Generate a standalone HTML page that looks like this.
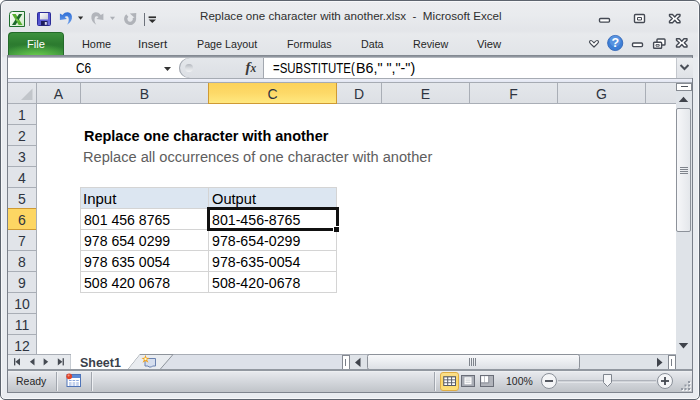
<!DOCTYPE html>
<html>
<head>
<meta charset="utf-8">
<title>Replace one character with another.xlsx - Microsoft Excel</title>
<style>
html,body{margin:0;padding:0;}
body{width:700px;height:400px;overflow:hidden;background:#fff;position:relative;font-family:"Liberation Sans",sans-serif;}
#win{position:absolute;left:0;top:0;width:698px;height:398px;border:1px solid #5d646e;border-radius:6px 6px 5px 5px;background:linear-gradient(#ecedf0 0px,#e9ebee 14px,#e3e5e9 30px,#e8eaed 33px,#e1e4e8 55px,#e9ecf0 57px,#e9ecf0 100%);box-shadow:inset 0 0 0 1px #f7f8fa;overflow:hidden;}
.abs{position:absolute;}
.t{position:absolute;white-space:nowrap;transform-origin:0 50%;line-height:1;}
.ui{font-size:11.3px;color:#262626;}
.cell{font-size:14px;color:#000;}
.hdr{font-size:14px;color:#2e3440;}
#inner{position:absolute;left:7px;top:55px;width:686px;height:338px;background:#fff;}
.colh{position:absolute;top:83px;height:20px;background:linear-gradient(#e9ecf0,#dfe3e8);border-right:1px solid #a9aeb6;}
.rowh{position:absolute;left:8px;width:28px;height:20px;background:#e1e4e9;border-bottom:1px solid #a9aeb6;}
.gl{position:absolute;background:#d4d4d4;}
</style>
</head>
<body>
<div id="win"></div>

<!-- title bar text -->
<div class="t ui" id="title" style="left:199.60px;transform:scaleX(1.0106);top:11.10px;font-size:11.5px;color:#2f2f2f;">Replace one character with another.xlsx&nbsp; -&nbsp; Microsoft Excel</div>

<!-- QAT icons -->
<svg class="abs" style="left:8px;top:9px" width="150" height="22" viewBox="0 0 150 22">
  <defs>
    <linearGradient id="gx" x1="0" y1="0" x2="1" y2="1"><stop offset="0" stop-color="#ffffff"/><stop offset="1" stop-color="#cfe8c8"/></linearGradient>
    <linearGradient id="gs" x1="0" y1="0" x2="1" y2="1"><stop offset="0" stop-color="#3f3fc4"/><stop offset="1" stop-color="#7474e2"/></linearGradient>
    <linearGradient id="gl" x1="0" y1="0" x2="1" y2="1"><stop offset="0" stop-color="#ffffff"/><stop offset="1" stop-color="#c9cbd6"/></linearGradient>
    <linearGradient id="gu" x1="0" y1="0" x2="0" y2="1"><stop offset="0" stop-color="#2f6fd6"/><stop offset="1" stop-color="#6fa0ec"/></linearGradient>
  </defs>
  <!-- excel icon -->
  <path d="M1.500 17.500 L1.500 5.500 Q1.500 2.500 4.500 2.500 L16.500 2.500 L16.500 17.500 Z" fill="url(#gx)" stroke="#1f6e2e" stroke-width="1"/>
  <path d="M4 5 L7.800 5 L14.500 16 L10.700 16 Z" fill="#58b030"/>
  <path d="M14.300 5 L11 5 L4 16 L7.500 16 Z" fill="#1e6a2c"/>
  <path d="M6.800 9.500 L9.300 9.500 L11.300 12.500 L8.800 12.500 Z" fill="#7acb4a"/>
  <!-- separator -->
  <rect x="21" y="4" width="1" height="13" fill="#8a8f98"/>
  <!-- save -->
  <rect x="29.500" y="3.500" width="13" height="13" rx="1" fill="url(#gs)" stroke="#2c2c98"/>
  <rect x="32" y="4" width="8" height="6.500" fill="url(#gl)"/>
  <rect x="33" y="12" width="6.500" height="4.500" fill="#1c1c5c"/>
  <rect x="36.800" y="13" width="2" height="2.800" fill="#d8d8f0"/>
  <!-- undo -->
  <path id="undo" d="M51.900 4.400 L51.900 11 L58.900 9.900 L56.700 8.100 C57.900 6.900 59.900 7 60.500 8.700 C61.200 10.900 60.600 13.500 59 15.800 C62.600 13.600 64.400 10.500 63.900 7.200 C63.300 3.400 58.200 1.500 54.500 5.900 Z" fill="url(#gu)"/>
  <path d="M70 7.500 L75.200 7.500 L72.600 10.800 Z" fill="#2e2e2e"/>
  <!-- redo (disabled) -->
  <path d="M51.900 4.400 L51.900 11 L58.900 9.900 L56.700 8.100 C57.900 6.900 59.900 7 60.500 8.700 C61.200 10.900 60.600 13.500 59 15.800 C62.600 13.600 64.400 10.500 63.900 7.200 C63.300 3.400 58.200 1.500 54.500 5.900 Z" fill="#b2b5bb" transform="translate(147.300 0) scale(-1 1)"/>
  <path d="M102 7.800 L107 7.800 L104.500 10.900 Z" fill="#adb0b6"/>
  <!-- repeat (disabled) -->
  <path d="M119.300 6.600 A4.400 4.400 0 1 0 126.300 8.600" fill="none" stroke="#b0b3b9" stroke-width="3.300"/>
  <path d="M121.800 4.600 L128.300 4 L128 10 Z" fill="#b0b3b9"/>
  <!-- separator -->
  <rect x="136" y="4" width="1" height="13" fill="#6d727b"/>
  <!-- customize -->
  <rect x="140.600" y="7.400" width="7.400" height="1.700" fill="#2e2e2e"/>
  <path d="M140.600 10.400 L148 10.400 L144.300 14.100 Z" fill="#2e2e2e"/>
</svg>

<!-- window buttons -->
<svg class="abs" style="left:580px;top:8px" width="115" height="46" viewBox="0 0 115 46">
  <g fill="#fff" stroke="#444953" stroke-width="1.400" stroke-linejoin="round">
    <rect x="19.500" y="10.500" width="10" height="3.600" rx="1"/>
    <rect x="54.500" y="6.500" width="10" height="8" rx="1"/>
    <rect x="57.500" y="9.500" width="4" height="2.500" stroke-width="1"/>
    <path d="M89.500 6.500 L92.500 6.500 L94.800 9 L97 6.500 L100 6.500 L100 8 L97.300 10.600 L100 13.200 L100 14.800 L97 14.800 L94.800 12.300 L92.500 14.800 L89.500 14.800 L89.500 13.200 L92.300 10.600 L89.500 8 Z"/>
    <!-- row 2 -->
    <path d="M9.500 34 Q9.500 32.500 11 32.500 Q12 32.500 14 34.800 Q16 32.500 17 32.500 Q18.500 32.500 18.500 34 Q18.500 35 14 39 Q9.500 35 9.500 34 Z" stroke-width="1.200"/>
    <rect x="52.500" y="35" width="10" height="3.600" rx="1"/>
    <rect x="77" y="31" width="8" height="6" rx=".8"/>
    <rect x="73.600" y="34.300" width="8" height="6" rx=".8"/>
    <rect x="76" y="36.600" width="3.200" height="1.600" stroke-width=".9"/>
    <path d="M96.500 30.800 L99.500 30.800 L101.800 33.200 L104 30.800 L107 30.800 L107 32.200 L104.300 34.800 L107 37.400 L107 39 L104 39 L101.800 36.500 L99.500 39 L96.500 39 L96.500 37.400 L99.300 34.800 L96.500 32.200 Z"/>
  </g>
  <circle cx="35.200" cy="35" r="7.600" fill="#3e7fd6" stroke="#2a5fb4" stroke-width=".8"/>
  <circle cx="35.200" cy="33" r="5.500" fill="#6ea4ea" opacity=".55"/>
  <text x="35.200" y="39.300" text-anchor="middle" font-family="Liberation Sans, sans-serif" font-weight="bold" font-size="12.500" fill="#fff">?</text>
</svg>

<!-- File tab -->
<div class="abs" style="left:8px;top:32px;width:56px;height:24px;border-radius:4px 4px 0 0;background:radial-gradient(ellipse 70% 55% at 50% 105%,#6fd24f 0%,rgba(95,196,74,0) 100%),linear-gradient(#3f9340 0%,#2c7b2f 50%,#33873a 100%);box-shadow:inset 1px 1px 0 #246a2a,inset -1px 0 0 #246a2a;"></div>
<div class="t ui" id="tFile" style="left:27.30px;transform:scaleX(0.9877);top:38.90px;color:#fff;">File</div>
<div class="t ui" id="tHome" style="left:81.60px;transform:scaleX(0.9648);top:38.90px;">Home</div>
<div class="t ui" id="tInsert" style="left:137.97px;transform:scaleX(1.0315);top:38.90px;">Insert</div>
<div class="t ui" id="tPage" style="left:196.90px;transform:scaleX(0.9487);top:38.90px;">Page Layout</div>
<div class="t ui" id="tForm" style="left:287.00px;transform:scaleX(0.9487);top:38.90px;">Formulas</div>
<div class="t ui" id="tData" style="left:361.30px;transform:scaleX(0.9439);top:38.90px;">Data</div>
<div class="t ui" id="tReview" style="left:413.30px;transform:scaleX(0.9503);top:38.90px;">Review</div>
<div class="t ui" id="tView" style="left:477.00px;transform:scaleX(0.9951);top:38.90px;">View</div>

<!-- inner content area -->
<div id="inner"></div>
<!-- ribbon bottom line -->
<div class="abs" style="left:7px;top:55px;width:686px;height:3px;background:linear-gradient(#7d838c,#8f959e 50%,#c5c9cf);"></div>
<!-- inner borders -->
<div class="abs" style="left:7px;top:56px;width:1px;height:337px;background:#7a808a;"></div>
<div class="abs" style="left:692px;top:56px;width:1px;height:337px;background:#7a808a;"></div>
<div class="abs" style="left:7px;top:392px;width:686px;height:1px;background:#7f858e;"></div>

<!-- formula bar -->
<div class="abs" style="left:8px;top:58px;width:684px;height:20px;background:#fff;"></div>
<div class="abs" style="left:179px;top:58px;width:84px;height:20px;border-radius:10px 0 0 10px;background:linear-gradient(#e4e7eb,#dcdfe4);box-shadow:inset 1px 0 0 #a3a8b0,inset 2px 0 1px -1px #c9cdd3;border-right:1px solid #a3a8b0;"></div>
<div class="abs" style="left:185px;top:64px;width:8px;height:8px;border-radius:4px;background:linear-gradient(#b4b8bf,#d9dce0 50%,#f2f3f5);"></div>
<div class="t" id="fx" style="left:245.500px;top:60px;font-family:'Liberation Serif',serif;font-style:italic;font-weight:bold;font-size:15px;color:#3a3a3a;">f<span style="font-size:11.500px;">x</span></div>
<div class="t cell" id="nameC6" style="left:76.00px;transform:scaleX(0.8503);top:61.25px;">C6</div>
<svg class="abs" style="left:163px;top:66px" width="10" height="6"><path d="M1 1 L8 1 L4.500 5 Z" fill="#333"/></svg>
<div class="t cell" id="formula" style="left:272.90px;transform:scaleX(0.8176);top:61.25px;">=SUBSTITUTE(</div><div class="t cell" id="formula2" style="left:355.68px;transform:scaleX(1.0207);top:61.25px;">B6," ","-")</div>
<!-- formula bar expand -->
<div class="abs" style="left:676px;top:58px;width:16px;height:20px;background:linear-gradient(#eceef1,#dfe2e7);border-left:1px solid #c3c7cd;"></div>
<svg class="abs" style="left:679px;top:63px" width="11" height="9"><path d="M1.500 2 L5.500 6 L9.500 2" fill="none" stroke="#4a4f58" stroke-width="2"/></svg>
<!-- lines under formula bar -->
<div class="abs" style="left:8px;top:78px;width:684px;height:1px;background:#a6abb3;"></div>
<div class="abs" style="left:8px;top:79px;width:684px;height:3px;background:linear-gradient(#eef0f8,#e2e6f2);"></div>
<div class="abs" style="left:8px;top:82px;width:684px;height:1px;background:#a6abb3;"></div>

<!-- column headers -->
<div class="abs" style="left:8px;top:83px;width:668px;height:20px;background:linear-gradient(#e4e7eb,#dde0e5);"></div>
<div class="abs" style="left:8px;top:103px;width:668px;height:1px;background:#a9aeb6;"></div>
<div class="abs" style="left:36px;top:83px;width:1px;height:271px;background:#a9aeb6;"></div>
<div class="abs" style="left:80px;top:83px;width:1px;height:20px;background:#a9aeb6;"></div>
<div class="abs" style="left:381px;top:83px;width:1px;height:20px;background:#a9aeb6;"></div>
<div class="abs" style="left:469px;top:83px;width:1px;height:20px;background:#a9aeb6;"></div>
<div class="abs" style="left:557px;top:83px;width:1px;height:20px;background:#a9aeb6;"></div>
<div class="abs" style="left:645px;top:83px;width:1px;height:20px;background:#a9aeb6;"></div>
<!-- selected col C -->
<div class="abs" style="left:208px;top:83px;width:129px;height:21px;box-sizing:border-box;background:linear-gradient(#fcd25a,#fdd968 50%,#ffe880);border:1px solid #cf9a33;border-top:none;"></div>
<svg class="abs" style="left:20px;top:88px" width="14" height="14"><path d="M12.500 0.500 L12.500 12 L1 12 Z" fill="#c1c5ca"/></svg>
<div class="t hdr" id="cA" style="left:37px;width:43px;text-align:center;top:87.05px;">A</div>
<div class="t hdr" id="cB" style="left:81px;width:127px;text-align:center;top:87.05px;">B</div>
<div class="t hdr" id="cC" style="left:209px;width:127px;text-align:center;top:87.05px;">C</div>
<div class="t hdr" id="cD" style="left:337px;width:44px;text-align:center;top:87.05px;">D</div>
<div class="t hdr" id="cE" style="left:382px;width:87px;text-align:center;top:87.05px;">E</div>
<div class="t hdr" id="cF" style="left:470px;width:87px;text-align:center;top:87.05px;">F</div>
<div class="t hdr" id="cG" style="left:558px;width:87px;text-align:center;top:87.05px;">G</div>

<!-- row headers -->
<div id="rows">
<div class="rowh" style="top:104px;"></div>
<div class="t hdr rn" style="top:108.05px;left:8px;width:28px;text-align:center;">1</div>
<div class="rowh" style="top:125px;"></div>
<div class="t hdr rn" style="top:129.05px;left:8px;width:28px;text-align:center;">2</div>
<div class="rowh" style="top:146px;"></div>
<div class="t hdr rn" style="top:150.05px;left:8px;width:28px;text-align:center;">3</div>
<div class="rowh" style="top:167px;"></div>
<div class="t hdr rn" style="top:171.05px;left:8px;width:28px;text-align:center;">4</div>
<div class="rowh" style="top:188px;"></div>
<div class="t hdr rn" style="top:192.05px;left:8px;width:28px;text-align:center;">5</div>
<div class="rowh" style="top:209px;background:#fdd663;border-bottom-color:#cf9a33;box-shadow:0 -1px 0 #cf9a33;"></div>
<div class="t hdr rn" style="top:213.05px;left:8px;width:28px;text-align:center;">6</div>
<div class="rowh" style="top:230px;"></div>
<div class="t hdr rn" style="top:234.05px;left:8px;width:28px;text-align:center;">7</div>
<div class="rowh" style="top:251px;"></div>
<div class="t hdr rn" style="top:255.05px;left:8px;width:28px;text-align:center;">8</div>
<div class="rowh" style="top:272px;"></div>
<div class="t hdr rn" style="top:276.05px;left:8px;width:28px;text-align:center;">9</div>
<div class="rowh" style="top:293px;"></div>
<div class="t hdr rn" style="top:297.05px;left:8px;width:28px;text-align:center;">10</div>
<div class="rowh" style="top:314px;"></div>
<div class="t hdr rn" style="top:318.05px;left:8px;width:28px;text-align:center;">11</div>
<div class="rowh" style="top:335px;"></div>
<div class="t hdr rn" style="top:339.05px;left:8px;width:28px;text-align:center;">12</div>
</div>

<!-- cells -->
<div class="abs" style="left:80px;top:187px;width:257px;height:22px;background:#dce6f1;"></div>
<div class="gl" style="left:80px;top:187px;width:257px;height:1px;"></div>
<div class="gl" style="left:80px;top:208px;width:257px;height:1px;"></div>
<div class="gl" style="left:80px;top:229px;width:257px;height:1px;"></div>
<div class="gl" style="left:80px;top:250px;width:257px;height:1px;"></div>
<div class="gl" style="left:80px;top:271px;width:257px;height:1px;"></div>
<div class="gl" style="left:80px;top:292px;width:257px;height:1px;"></div>
<div class="gl" style="left:80px;top:187px;width:1px;height:106px;"></div>
<div class="gl" style="left:208px;top:187px;width:1px;height:106px;"></div>
<div class="gl" style="left:336px;top:187px;width:1px;height:106px;"></div>
<!-- selection -->
<div class="abs" style="left:207px;top:207px;width:132px;height:24px;box-sizing:border-box;border:3px solid #111;"></div>
<div class="abs" style="left:333px;top:226px;width:7px;height:6px;background:#fff;"></div>
<div class="abs" style="left:334px;top:227px;width:5px;height:5px;background:#111;"></div>

<div class="t cell" id="h1" style="left:83.80px;transform:scaleX(1.0330);top:129.05px;font-weight:bold;">Replace one character with another</div>
<div class="t cell" id="h2" style="left:82.76px;transform:scaleX(1.0438);top:150.05px;color:#5e5e5e;">Replace all occurrences of one character with another</div>
<div class="t cell" id="i0" style="left:82.53px;transform:scaleX(1.0711);top:192.05px;">Input</div>
<div class="t cell" id="o0" style="left:211.50px;transform:scaleX(1.0466);top:192.05px;">Output</div>
<div class="t cell" id="i1" style="left:83.60px;transform:scaleX(1.0064);top:213.05px;">801 456 8765</div>
<div class="t cell" id="o1" style="left:211.50px;transform:scaleX(1.0126);top:213.05px;">801-456-8765</div>
<div class="t cell" id="i2" style="left:83.60px;transform:scaleX(1.0064);top:234.05px;">978 654 0299</div>
<div class="t cell" id="o2" style="left:211.50px;transform:scaleX(1.0126);top:234.05px;">978-654-0299</div>
<div class="t cell" id="i3" style="left:83.60px;transform:scaleX(1.0064);top:255.05px;">978 635 0054</div>
<div class="t cell" id="o3" style="left:211.50px;transform:scaleX(1.0126);top:255.05px;">978-635-0054</div>
<div class="t cell" id="i4" style="left:83.60px;transform:scaleX(1.0064);top:276.05px;">508 420 0678</div>
<div class="t cell" id="o4" style="left:211.50px;transform:scaleX(1.0126);top:276.05px;">508-420-0678</div>

<!-- vertical scrollbar -->
<div class="abs" style="left:676px;top:83px;width:16px;height:271px;background:#dfe3e8;"></div>
<div class="abs" style="left:676px;top:83px;width:16px;height:8px;box-sizing:border-box;border:1.500px solid #858a92;background:#fff;"></div>
<div class="abs" style="left:681px;top:86px;width:7px;height:1px;background:#4f545c;"></div>
<svg class="abs" style="left:678px;top:96px" width="12" height="7"><path d="M0.800 6 L5.500 0.800 L10.200 6 Z" fill="#3f434b"/></svg>
<div class="abs" style="left:676px;top:108px;width:15px;height:124px;box-sizing:border-box;border:1px solid #8d929a;border-radius:2px;background:linear-gradient(90deg,#f6f7f9,#e4e7eb);"></div>
<div class="abs" style="left:680px;top:167px;width:8px;height:1px;background:#7f848c;box-shadow:0 2px 0 #7f848c,0 4px 0 #7f848c,0 6px 0 #7f848c;"></div>
<svg class="abs" style="left:678px;top:342px" width="12" height="8"><path d="M0.800 1 L10.200 1 L5.500 6.500 Z" fill="#3f434b"/></svg>

<!-- sheet tab bar -->
<div class="abs" style="left:8px;top:354px;width:684px;height:16px;background:#dde1e9;"></div>
<div class="abs" style="left:8px;top:354px;width:668px;height:1px;background:#a9aeb6;"></div>
<div class="abs" style="left:8px;top:355px;width:63px;height:14px;background:#e6e9ed;"></div>
<svg class="abs" style="left:8px;top:354px" width="200" height="16" viewBox="0 0 200 16">
  <g fill="#454a52">
    <rect x="6" y="4.200" width="1.300" height="7.200"/><path d="M12 4.200 L12 11.400 L7.400 7.800 Z"/>
    <path d="M26.500 4.200 L26.500 11.400 L21.900 7.800 Z"/>
    <path d="M35.600 4.200 L35.600 11.400 L40.200 7.800 Z"/>
    <path d="M49.800 4.200 L49.800 11.400 L54.400 7.800 Z"/><rect x="54.600" y="4.200" width="1.300" height="7.200"/>
  </g>
  <path d="M63 0.500 L63 15.500" stroke="#a9aeb6" fill="none"/>
  <path d="M63 0 L132 0 L120 15.500 L63 15.500 Z" fill="#fff"/>
  <path d="M132 0.500 L120 15.500" stroke="#8e949c" fill="none"/>
  <path d="M120 15.500 L152 15.500 L165 0.500 L132 0.500" fill="#e9ecf0" stroke="#8e949c"/>
  <path d="M137 4.500 H147.500 V12 H144.500 L143.500 13 H141 L140 12 H137 Z" fill="#d5deee" stroke="#6a82b0" stroke-width="1"/>
  <path d="M137.500 0.800 L138.500 3.800 L141.500 4 L139 5.800 L140.500 8.800 L137.500 7 L134.500 8.800 L136 5.800 L133.500 4 L136.500 3.800 Z" fill="#f0a21c"/>
  <circle cx="137.500" cy="5" r="1.200" fill="#fff6c8"/>
</svg>
<div class="t ui" id="sheet1" style="left:80.40px;transform:scaleX(1.0384);top:356.7px;font-weight:bold;font-size:12px;color:#3a3f4a;">Sheet1</div>

<!-- horizontal scrollbar -->
<div class="abs" style="left:350px;top:355px;width:326px;height:15px;background:#dfe3e8;"></div>
<div class="abs" style="left:342px;top:355px;width:8px;height:15px;box-sizing:border-box;border:1.500px solid #858a92;background:#fff;"></div>
<div class="abs" style="left:345px;top:359px;width:1px;height:7px;background:#7a7f88;"></div>
<svg class="abs" style="left:354px;top:357px" width="8" height="11"><path d="M6.500 0.800 L6.500 10 L1 5.400 Z" fill="#3f434b"/></svg>
<div class="abs" style="left:367px;top:354px;width:213px;height:16px;box-sizing:border-box;border:1px solid #8d929a;border-radius:2.500px;background:linear-gradient(#f7f8fa,#eceef1 45%,#dde0e5);"></div>
<div class="abs" style="left:469px;top:358px;width:1px;height:8px;background:#7f848c;box-shadow:2px 0 0 #7f848c,4px 0 0 #7f848c,6px 0 0 #7f848c;"></div>
<svg class="abs" style="left:656px;top:357px" width="8" height="11"><path d="M1 0.800 L1 10 L6.500 5.400 Z" fill="#3f434b"/></svg>
<div class="abs" style="left:668px;top:355px;width:8px;height:15px;box-sizing:border-box;border:1.500px solid #858a92;background:#fff;"></div>
<div class="abs" style="left:671px;top:359px;width:1px;height:7px;background:#7a7f88;"></div>
<div class="abs" style="left:676px;top:354px;width:16px;height:16px;background:#dfe3e8;"></div>
<div class="abs" style="left:8px;top:369px;width:684px;height:2px;background:#9298a0;"></div>

<!-- status bar -->
<div class="abs" style="left:8px;top:371px;width:684px;height:21px;background:linear-gradient(#f0f2f4 0px,#e6e8ec 1.500px,#d6d9de 45%,#c0c4c9 100%);"></div>
<div class="t ui" id="ready" style="left:16.40px;transform:scaleX(0.9271);top:376.10px;">Ready</div>
<div class="abs" style="left:56px;top:372px;width:1px;height:19px;background:#a1a6ae;box-shadow:1px 0 0 #eef0f3;"></div>
<div class="abs" style="left:91px;top:372px;width:1px;height:19px;background:#a1a6ae;box-shadow:1px 0 0 #eef0f3;"></div>
<svg class="abs" style="left:65px;top:372px" width="18" height="18" viewBox="0 0 18 18">
  <rect x="2" y="2.500" width="13.500" height="12" fill="#fff" stroke="#4f74b8"/>
  <rect x="2.500" y="3" width="12.500" height="3" fill="#5d8ad6"/>
  <path d="M4 8.500 H14 M4 11 H14 M4 13 H14" stroke="#8aa6dc" stroke-width="1.200" stroke-dasharray="2.600 1"/>
  <circle cx="4.200" cy="4.300" r="2.900" fill="#e0452c"/>
  <circle cx="3.600" cy="3.600" r="1" fill="#f59a80"/>
</svg>
<!-- view buttons -->
<div class="abs" style="left:434px;top:372px;width:1px;height:19px;background:#a1a6ae;box-shadow:1px 0 0 #eef0f3;"></div>
<div class="abs" style="left:440px;top:372px;width:19px;height:19px;box-sizing:border-box;border:1px solid #dfae45;border-radius:3px;background:linear-gradient(#fbe08c,#fcd768 50%,#fde07a);"></div>
<svg class="abs" style="left:443px;top:374px" width="56" height="14" viewBox="0 0 56 14">
  <rect x="0.200" y="2.200" width="12.800" height="9.800" fill="#575c68"/>
  <g fill="#fff"><rect x="1.300" y="3.400" width="2.900" height="2"/><rect x="5.200" y="3.400" width="2.900" height="2"/><rect x="9.100" y="3.400" width="2.900" height="2"/>
  <rect x="1.300" y="6.300" width="2.900" height="2"/><rect x="5.200" y="6.300" width="2.900" height="2"/><rect x="9.100" y="6.300" width="2.900" height="2"/>
  <rect x="1.300" y="9.200" width="2.900" height="1.800"/><rect x="5.200" y="9.200" width="2.900" height="1.800"/><rect x="9.100" y="9.200" width="2.900" height="1.800"/></g>
  <rect x="18.500" y="1.500" width="13" height="11" fill="#a9adb5" stroke="#6a6e78"/>
  <rect x="21.500" y="3.300" width="7" height="7" fill="#fff"/>
  <path d="M22.500 5 H27.500 M22.500 6.800 H27.500 M22.500 8.600 H27.500" stroke="#c3c6cc" stroke-width=".8"/>
  <rect x="37.500" y="1.500" width="13" height="11" fill="#b1b4bb" stroke="#6a6e78"/>
  <rect x="38.200" y="2.200" width="3" height="6" fill="#fff"/><rect x="42" y="2.200" width="3.200" height="6" fill="#fff"/>
  <path d="M38 9 H45.800 V2" fill="none" stroke="#8a8e97" stroke-width=".8"/>
</svg>
<div class="t ui" id="zoom" style="left:506.00px;transform:scaleX(0.9255);top:376.10px;">100%</div>
<svg class="abs" style="left:540px;top:371px" width="140" height="20" viewBox="0 0 140 20">
  <circle cx="9" cy="10" r="7.500" fill="#f4f5f7" stroke="#8a9099"/>
  <rect x="5" y="9.100" width="8" height="1.800" fill="#454a52"/>
  <rect x="18" y="9.500" width="98" height="1" fill="#8a9099"/>
  <rect x="18" y="10.500" width="98" height="1" fill="#f1f3f5"/>
  <path d="M63.500 3.500 H71.500 V11.500 L67.500 15.500 L63.500 11.500 Z" fill="#f4f5f7" stroke="#7f858e"/>
  <circle cx="125" cy="10" r="7.500" fill="#f4f5f7" stroke="#8a9099"/>
  <rect x="121" y="9.100" width="8" height="1.800" fill="#454a52"/>
  <rect x="124.100" y="6" width="1.800" height="8" fill="#454a52"/>
</svg>
<svg class="abs" style="left:680px;top:380px" width="12" height="12" viewBox="0 0 12 12">
  <g fill="#f4f5f7"><rect x="9" y="2" width="2" height="2"/><rect x="5.500" y="5.500" width="2" height="2"/><rect x="9" y="5.500" width="2" height="2"/><rect x="2" y="9" width="2" height="2"/><rect x="5.500" y="9" width="2" height="2"/><rect x="9" y="9" width="2" height="2"/></g>
  <g fill="#9399a3"><rect x="8" y="1" width="2" height="2"/><rect x="4.500" y="4.500" width="2" height="2"/><rect x="8" y="4.500" width="2" height="2"/><rect x="1" y="8" width="2" height="2"/><rect x="4.500" y="8" width="2" height="2"/><rect x="8" y="8" width="2" height="2"/></g>
</svg>

</body>
</html>
